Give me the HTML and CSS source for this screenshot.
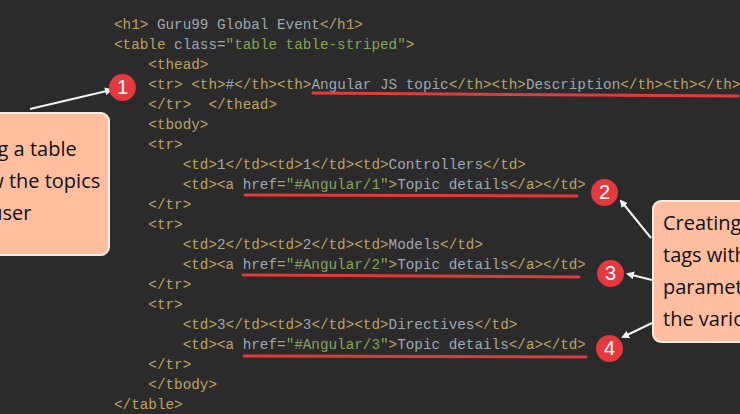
FILE: index.html
```html
<!DOCTYPE html>
<html lang="en">
<head>
  <meta charset="UTF-8" />
  <meta name="viewport" content="width=device-width, initial-scale=1.0"/>
  <title>AngularJS routing - table example</title>
  <link rel="stylesheet" href="styles.css">
</head>
<body>

<div class="shot">
<pre class="code"><span class="t">&lt;h1&gt;</span> <span class="x">Guru99 Global Event</span><span class="t">&lt;/h1&gt;</span>
<span class="t">&lt;table </span><span class="x">class</span><span class="x">=</span><span class="s">"table table-striped"</span><span class="t">&gt;</span>
    <span class="t">&lt;thead&gt;</span>
    <span class="t">&lt;tr&gt;</span> <span class="t">&lt;th&gt;</span><span class="x">#</span><span class="t">&lt;/th&gt;&lt;th&gt;</span><span class="x">Angular JS topic</span><span class="t">&lt;/th&gt;&lt;th&gt;</span><span class="x">Description</span><span class="t">&lt;/th&gt;&lt;th&gt;&lt;/th&gt;&lt;/tr&gt;</span>
    <span class="t">&lt;/tr&gt;  &lt;/thead&gt;</span>
    <span class="t">&lt;tbody&gt;</span>
    <span class="t">&lt;tr&gt;</span>
        <span class="t">&lt;td&gt;</span><span class="x">1</span><span class="t">&lt;/td&gt;&lt;td&gt;</span><span class="x">1</span><span class="t">&lt;/td&gt;&lt;td&gt;</span><span class="x">Controllers</span><span class="t">&lt;/td&gt;</span>
        <span class="t">&lt;td&gt;&lt;a </span><span class="x">href</span><span class="t">=</span><span class="s">"#Angular/1"</span><span class="t">&gt;</span><span class="x">Topic details</span><span class="t">&lt;/a&gt;&lt;/td&gt;</span>
    <span class="t">&lt;/tr&gt;</span>
    <span class="t">&lt;tr&gt;</span>
        <span class="t">&lt;td&gt;</span><span class="x">2</span><span class="t">&lt;/td&gt;&lt;td&gt;</span><span class="x">2</span><span class="t">&lt;/td&gt;&lt;td&gt;</span><span class="x">Models</span><span class="t">&lt;/td&gt;</span>
        <span class="t">&lt;td&gt;&lt;a </span><span class="x">href</span><span class="t">=</span><span class="s">"#Angular/2"</span><span class="t">&gt;</span><span class="x">Topic details</span><span class="t">&lt;/a&gt;&lt;/td&gt;</span>
    <span class="t">&lt;/tr&gt;</span>
    <span class="t">&lt;tr&gt;</span>
        <span class="t">&lt;td&gt;</span><span class="x">3</span><span class="t">&lt;/td&gt;&lt;td&gt;</span><span class="x">3</span><span class="t">&lt;/td&gt;&lt;td&gt;</span><span class="x">Directives</span><span class="t">&lt;/td&gt;</span>
        <span class="t">&lt;td&gt;&lt;a </span><span class="x">href</span><span class="t">=</span><span class="s">"#Angular/3"</span><span class="t">&gt;</span><span class="x">Topic details</span><span class="t">&lt;/a&gt;&lt;/td&gt;</span>
    <span class="t">&lt;/tr&gt;</span>
    <span class="t">&lt;/tbody&gt;</span>
<span class="t">&lt;/table&gt;</span></pre>

  <!-- annotations drawn over the code -->
  <svg class="marks" width="740" height="414" viewBox="0 0 740 414">
    <defs>
      <marker id="head" markerWidth="8" markerHeight="8" refX="6" refY="4" orient="auto" markerUnits="userSpaceOnUse">
        <path d="M0,0 L8,4 L0,8 Z" fill="#f2f2f2"/>
      </marker>
    </defs>
    <g stroke="#e23b3b" stroke-width="3" stroke-linecap="round">
      <line x1="313" y1="93" x2="738" y2="96"/>
      <line x1="245" y1="195" x2="577" y2="196"/>
      <line x1="243" y1="275" x2="579" y2="277"/>
      <line x1="244" y1="356" x2="586" y2="357"/>
    </g>
    <g stroke="#f2f2f2" stroke-width="2" marker-end="url(#head)">
      <line x1="30" y1="109" x2="111" y2="90"/>
      <line x1="651" y1="238" x2="621" y2="201"/>
      <line x1="652" y1="280" x2="628" y2="274"/>
      <line x1="652" y1="323" x2="623" y2="337"/>
    </g>
  </svg>

  <div class="pin pin-1">1</div>
  <div class="pin pin-2">2</div>
  <div class="pin pin-3">3</div>
  <div class="pin pin-4">4</div>

  <div class="note note-left">
    <p>Creating a table</p>
    <p>to show the topics</p>
    <p>to the user</p>
  </div>
  <div class="note note-right">
    <p>Creating anchor</p>
    <p>tags with</p>
    <p>parameters for</p>
    <p>the various topics</p>
  </div>
</div>

</body>
</html>
```

FILE: styles.css
```css
body {
  margin: 0;
  background: #2b2b2b;
  overflow: hidden;
}
.shot {
  position: relative;
  width: 740px;
  height: 414px;
  overflow: hidden;
  background: #2b2b2b;
}
.code {
  margin: 0;
  padding: 15px 0 0 114px;
  font-family: "Liberation Mono", "Courier New", monospace;
  font-size: 14.3px;
  line-height: 20px;
  color: #9ea7b1;
  white-space: pre;
}
.t {
  color: #bda263;
}
.x {
  color: #9ea7b1;
}
.s {
  color: #86a35a;
}
.marks {
  position: absolute;
  left: 0;
  top: 0;
}
.pin {
  position: absolute;
  width: 27px;
  height: 27px;
  margin: -13px 0 0 -13px;
  border-radius: 50%;
  background: #e3393f;
  color: white;
  font-family: "Liberation Sans", Arial, sans-serif;
  font-size: 20px;
  line-height: 27px;
  text-align: center;
}
.pin-1 { left: 122px; top: 87px; }
.pin-2 { left: 604px; top: 192px; }
.pin-3 { left: 610px; top: 273px; }
.pin-4 { left: 609px; top: 348px; }
.note {
  position: absolute;
  background: #ffbea0;
  border: 2px solid #f4eee9;
  border-radius: 9px;
  box-sizing: border-box;
  font-family: "Open Sans", sans-serif;
  font-size: 20px;
  color: #111;
}
.note p {
  margin: 0;
  height: 32px;
  line-height: 32px;
  white-space: nowrap;
}
.note-left {
  left: -140px;
  top: 112px;
  width: 250px;
  height: 144px;
  padding: 19px 0 0 68px;
}
.note-right {
  left: 652px;
  top: 200px;
  width: 220px;
  height: 143px;
  padding: 5px 0 0 9px;
}
```
